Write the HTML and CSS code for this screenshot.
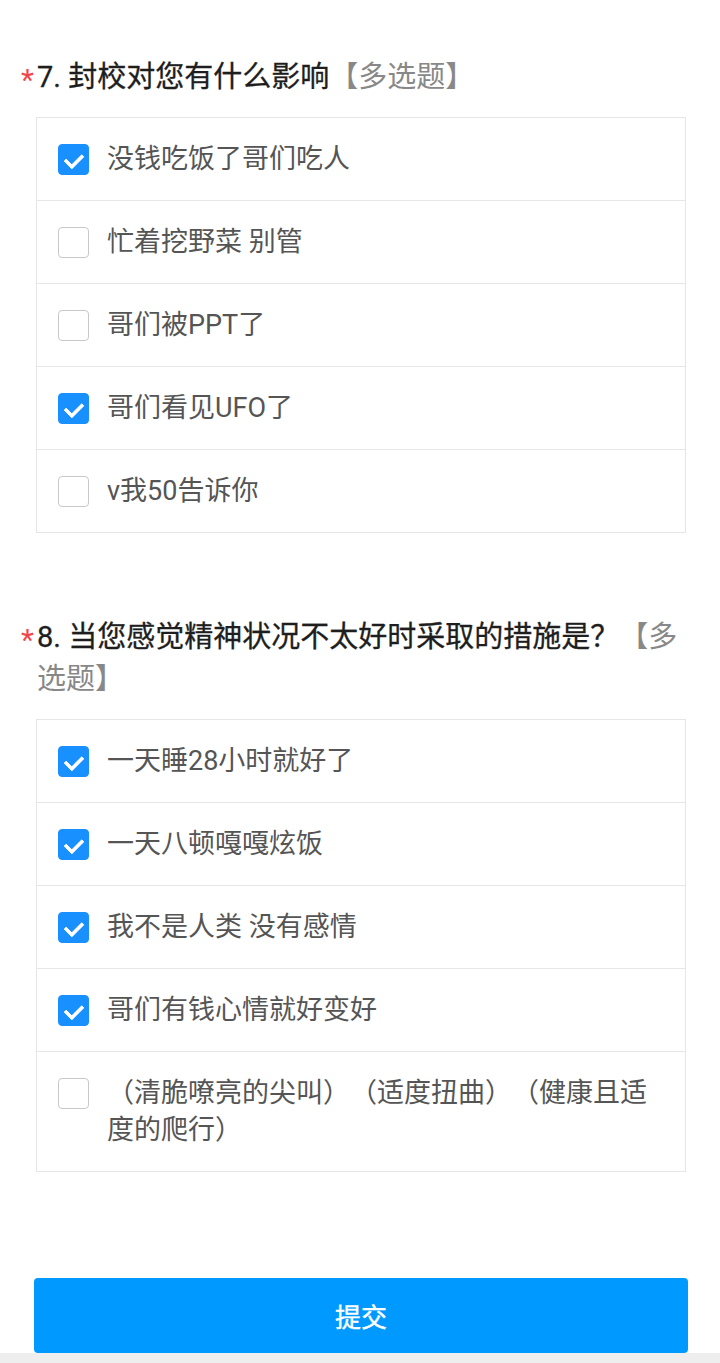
FILE: index.html
```html
<!DOCTYPE html>
<html lang="zh-CN">
<head>
  <meta charset="UTF-8" />
  <meta name="viewport" content="width=device-width, initial-scale=1" />
  <title>问卷</title>
  <link rel="stylesheet" href="styles.css">
</head>
<body>
  <div class="page">

    <div class="question">
      <div class="title"><span class="star">*</span>7. 封校对您有什么影响<span class="hint">【多选题】</span></div>
      <div class="options">
        <label class="option"><span class="box checked"></span><span class="text">没钱吃饭了哥们吃人</span></label>
        <label class="option"><span class="box"></span><span class="text">忙着挖野菜 别管</span></label>
        <label class="option"><span class="box"></span><span class="text">哥们被PPT了</span></label>
        <label class="option"><span class="box checked"></span><span class="text">哥们看见UFO了</span></label>
        <label class="option"><span class="box"></span><span class="text">v我50告诉你</span></label>
      </div>
    </div>

    <div class="question">
      <div class="title"><span class="star">*</span>8. 当您感觉精神状况不太好时采取的措施是？<span class="hint">【多选题】</span></div>
      <div class="options">
        <label class="option"><span class="box checked"></span><span class="text">一天睡28小时就好了</span></label>
        <label class="option"><span class="box checked"></span><span class="text">一天八顿嘎嘎炫饭</span></label>
        <label class="option"><span class="box checked"></span><span class="text">我不是人类 没有感情</span></label>
        <label class="option"><span class="box checked"></span><span class="text">哥们有钱心情就好变好</span></label>
        <label class="option"><span class="box"></span><span class="text">（清脆嘹亮的尖叫）（适度扭曲）（健康且适度的爬行）</span></label>
      </div>
    </div>

    <button class="submit">提交</button>
  </div>
</body>
</html>
```

FILE: styles.css
```css
* {
  margin: 0;
  padding: 0;
  box-sizing: border-box;
}

body {
  background: #eeeeee;
  font-family: Roboto, "Noto Sans CJK SC", sans-serif;
  text-spacing-trim: space-all;
}

.page {
  background: #fff;
  padding: 56px 0 0;
}

.question {
  margin-bottom: 83px;
}

.title {
  padding: 0 36px 0 37px;
  font-size: 29px;
  line-height: 42px;
  color: #1e1e1e;
  -webkit-text-stroke: 0.3px #1e1e1e;
  margin-bottom: 19px;
}

.star {
  display: inline-block;
  width: 19px;
  margin-left: -19px;
  color: #f04848;
  -webkit-text-stroke: 0;
  font-size: 30px;
  line-height: 0;
  text-align: center;
  vertical-align: -3px;
}

.hint {
  color: #888;
  -webkit-text-stroke: 0;
}

.options {
  margin: 0 34px 0 36px;
  border: 1px solid #e6e6e6;
}

.option {
  display: flex;
  align-items: flex-start;
  gap: 18px;
  padding: 23px 30px 22px 21px;
  border-top: 1px solid #e6e6e6;
}

.option:first-child {
  border-top: none;
}

.box {
  flex: none;
  width: 31px;
  height: 31px;
  margin-top: 3px;
  border: 1px solid #c8c8c8;
  border-radius: 4px;
  background: #fff;
  position: relative;
}

.box.checked {
  background: #1890ff;
  border-color: #1890ff;
}

.box.checked::after {
  content: "";
  position: absolute;
  left: 9px;
  top: 5px;
  width: 8px;
  height: 14px;
  border: solid #fff;
  border-width: 0 4px 4px 0;
  border-radius: 1px;
  transform: rotate(45deg);
}

.text {
  font-size: 27px;
  line-height: 37px;
  color: #555;
}

.submit {
  display: block;
  width: 654px;
  height: 75px;
  margin: 106px 0 0 34px;
  border: none;
  border-radius: 4px;
  background: #0099ff;
  color: #fff;
  font-family: Roboto, "Noto Sans CJK SC", sans-serif;
  font-size: 26px;
  -webkit-text-stroke: 0.4px #fff;
}
```
